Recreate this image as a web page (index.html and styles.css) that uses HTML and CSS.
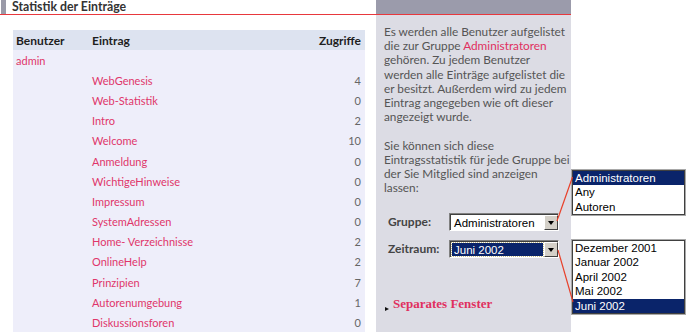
FILE: index.html
```html
<!DOCTYPE html>
<html lang="de">
<head>
<meta charset="utf-8">
<title>Statistik der Einträge</title>
<link rel="stylesheet" href="styles.css">
</head>
<body>
<div class="page">
  <div class="main">
    <div class="title"><span class="title-mark"></span><span class="title-text">Statistik der Einträge</span></div>
    <table class="stats">
      <thead>
        <tr><th class="col-user">Benutzer</th><th>Eintrag</th><th class="num">Zugriffe</th></tr>
      </thead>
      <tbody>
        <tr><td>admin</td><td></td><td class="num"></td></tr>
        <tr><td></td><td>WebGenesis</td><td class="num">4</td></tr>
        <tr><td></td><td>Web-Statistik</td><td class="num">0</td></tr>
        <tr><td></td><td>Intro</td><td class="num">2</td></tr>
        <tr><td></td><td>Welcome</td><td class="num">10</td></tr>
        <tr><td></td><td>Anmeldung</td><td class="num">0</td></tr>
        <tr><td></td><td>WichtigeHinweise</td><td class="num">0</td></tr>
        <tr><td></td><td>Impressum</td><td class="num">0</td></tr>
        <tr><td></td><td>SystemAdressen</td><td class="num">0</td></tr>
        <tr><td></td><td>Home- Verzeichnisse</td><td class="num">2</td></tr>
        <tr><td></td><td>OnlineHelp</td><td class="num">2</td></tr>
        <tr><td></td><td>Prinzipien</td><td class="num">7</td></tr>
        <tr><td></td><td>Autorenumgebung</td><td class="num">1</td></tr>
        <tr><td></td><td>Diskussionsforen</td><td class="num">0</td></tr>
      </tbody>
    </table>
  </div>
  <aside class="panel">
    <div class="panel-band"></div>
    <div class="panel-body">
      <p>Es werden alle Benutzer aufgelistet<br>die zur Gruppe <a class="link" href="#">Administratoren</a><br>gehören. Zu jedem Benutzer<br>werden alle Einträge aufgelistet die<br>er besitzt. Außerdem wird zu jedem<br>Eintrag angegeben wie oft dieser<br>angezeigt wurde.</p>
      <p>Sie können sich diese<br>Eintragsstatistik für jede Gruppe bei<br>der Sie Mitglied sind anzeigen<br>lassen:</p>
      <div class="form">
        <span class="label">Gruppe:</span>
        <div class="select"><span class="select-value">Administratoren</span><span class="select-btn"><span class="tri"></span></span></div>
        <span class="label">Zeitraum:</span>
        <div class="select"><span class="select-value selected">Juni 2002</span><span class="select-btn"><span class="tri"></span></span></div>
      </div>
      <div class="sep-row"><span class="bullet"></span><a class="sep-link" href="#">Separates Fenster</a></div>
    </div>
  </aside>
  <ul class="list list-group">
    <li class="hl">Administratoren</li>
    <li>Any</li>
    <li>Autoren</li>
  </ul>
  <ul class="list list-time">
    <li>Dezember 2001</li>
    <li>Januar 2002</li>
    <li>April 2002</li>
    <li>Mai 2002</li>
    <li class="hl">Juni 2002</li>
  </ul>
  <svg class="connectors" width="700" height="332" viewBox="0 0 700 332">
    <line x1="557" y1="221" x2="572.5" y2="177" />
    <line x1="558" y1="250" x2="573" y2="302" />
  </svg>
</div>
</body>
</html>
```
FILE: styles.css
```css
* { box-sizing: border-box; }
html, body { margin: 0; padding: 0; }
body {
  width: 700px;
  height: 332px;
  overflow: hidden;
  background: #fff;
  font-family: Lato, "Open Sans", sans-serif;
}
.page {
  position: relative;
  display: flex;
  height: 332px;
}
.main { width: 376px; flex: none; }
.title {
  height: 15px;
  border-bottom: 1px solid #e8383d;
  display: flex;
  align-items: flex-start;
}
.title-mark {
  width: 5px;
  height: 14px;
  margin-left: 1px;
  background: #9a9aa8;
}
.title-text {
  margin-left: 6px;
  font-weight: 700;
  font-size: 12.3px;
  line-height: 14px;
  color: #333;
}
.stats {
  margin: 15px 0 0 13px;
  width: 352px;
  border-collapse: collapse;
  font-size: 11px;
}
.stats th {
  background: #dde3f0;
  height: 20px;
  padding: 0 3px;
  font-weight: 700;
  font-size: 12px;
  color: #1e1e1e;
  text-align: left;
}
.stats td {
  background: #eeeefa;
  height: 20.2px;
  padding: 0 3px;
  color: #e0366a;
}
.stats .col-user { width: 76px; }
.stats .num { text-align: right; padding-right: 4px; }
.stats td.num { color: #666; }
.panel {
  width: 195px;
  flex: none;
  height: 332px;
  background: #dcdce4;
}
.panel-band {
  height: 15px;
  background: #9b9bab;
  border-bottom: 1px solid #e8383d;
}
.panel-body {
  padding: 10px 0 0 8px;
  font-size: 11.8px;
  line-height: 14.2px;
  color: #555;
}
.panel-body p { margin: 0; white-space: nowrap; }
.panel-body p + p { margin-top: 14.2px; }
.link { color: #e0305f; text-decoration: none; }
.form {
  display: grid;
  grid-template-columns: 65px 110px;
  row-gap: 9px;
  align-items: center;
  margin-top: 17.6px;
}
.label {
  padding-left: 4px;
  font-weight: 700;
  font-size: 12px;
  color: #444;
}
.select {
  height: 18px;
  display: flex;
  border: 1px solid;
  border-color: #808080 #fff #fff #808080;
  box-shadow: inset 1px 1px 0 #404040;
  background: #fff;
  padding: 1px 0 0 1px;
  font-family: "Liberation Sans", Arial, sans-serif;
  font-size: 11.5px;
  line-height: 14px;
  color: #000;
}
.select-value {
  flex: 1;
  padding-left: 2px;
  margin: 1px;
}
.select-value.selected {
  background: #0a246a;
  color: #fff;
  outline: 1px dotted #c8c08a;
}
.select-btn {
  width: 14px;
  flex: none;
  background: #d4d0c8;
  border: 1px solid;
  border-color: #fff #404040 #404040 #fff;
  display: flex;
  align-items: center;
  justify-content: center;
}
.tri {
  width: 0;
  height: 0;
  border-left: 3.5px solid transparent;
  border-right: 3.5px solid transparent;
  border-top: 4px solid #000;
}
.sep-row {
  display: flex;
  align-items: flex-end;
  height: 14px;
  margin-top: 39px;
}
.bullet {
  width: 0;
  height: 0;
  margin: 0 4px 0 1px;
  border-top: 2.5px solid transparent;
  border-bottom: 2.5px solid transparent;
  border-left: 4px solid #111;
}
.sep-link {
  font-family: "Liberation Serif", "Times New Roman", serif;
  font-weight: 700;
  font-size: 13px;
  line-height: 14px;
  color: #e0305f;
  text-decoration: none;
}
.list {
  position: absolute;
  left: 572px;
  width: 113px;
  margin: 0;
  padding: 0;
  list-style: none;
  background: #fff;
  border: 1px solid #404040;
  box-shadow: 0 0 0 1px #a8a8a8;
  font-family: "Liberation Sans", Arial, sans-serif;
  font-size: 11.5px;
  color: #000;
}
.list li {
  height: 14.3px;
  line-height: 14.3px;
  padding-left: 2px;
  white-space: nowrap;
}
.list li.hl {
  background: #0a246a;
  color: #fff;
}
.list-group { top: 170px; }
.list-time { top: 240px; }
.list-time li { height: 14.4px; line-height: 14.4px; }
.connectors {
  position: absolute;
  left: 0;
  top: 0;
  pointer-events: none;
}
.connectors line {
  stroke: #e8402a;
  stroke-width: 1.2;
}
```
